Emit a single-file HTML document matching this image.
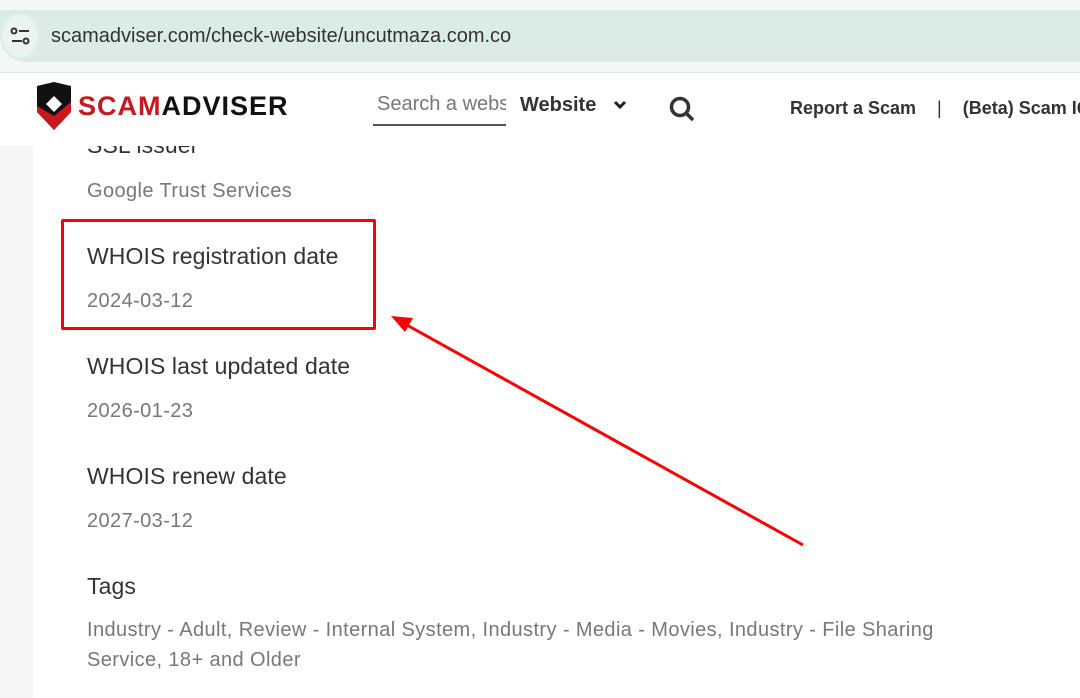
<!DOCTYPE html>
<html><head><style>
body{margin:0;width:1080px;height:698px;overflow:hidden;background:#f4f5f5;font-family:"Liberation Sans",Arial,sans-serif;position:relative}
.a{position:absolute}
.lab{position:absolute;left:87px;font-size:23px;color:#333;letter-spacing:0.1px}
.val{position:absolute;left:87px;font-size:20px;color:#777;letter-spacing:0.4px}
</style></head><body>
<div class="a" style="left:0;top:0;width:1080px;height:72px;background:#f3f8f7;border-bottom:1px solid #d6e3e0"></div>
<div class="a" style="left:0;top:10px;width:1080px;height:52px;background:#dbece8;border-radius:0 0 0 26px"></div>
<div class="a" style="left:2px;top:14px;width:36px;height:44px;border-radius:50%;background:#e9f3f1"></div>
<svg class="a" style="left:10px;top:26px" width="22" height="20" viewBox="0 0 22 20" fill="none" stroke="#333" stroke-width="2"><circle cx="4" cy="5" r="2.5"/><line x1="9" y1="5" x2="19" y2="5"/><line x1="2" y1="15" x2="12" y2="15"/><circle cx="16" cy="15" r="2.5"/></svg>
<div class="a" style="left:51px;top:25px;font-size:20px;color:#333">scamadviser.com/check-website/uncutmaza.com.co</div>
<div class="a" style="left:0;top:73px;width:1080px;height:73px;background:#fff"></div>
<div class="a" style="left:33px;top:146px;width:1047px;height:552px;background:#fff"></div>
<svg class="a" style="left:35px;top:82px" width="38" height="50" viewBox="0 0 38 50"><path d="M2 4 L19 0 L36 4 L36 30 L19 48 L2 30Z" fill="#111"/><path d="M2 24 L19 34 L36 20 L36 30 L19 48 L2 30Z" fill="#c8181e"/><path d="M19 14 L27 22 L19 30 L11 22Z" fill="#fff"/></svg>
<div class="a" style="left:78px;top:91px;font-size:27px;font-weight:bold;letter-spacing:1px"><span style="color:#c8181e">SCAM</span><span style="color:#111">ADVISER</span></div>
<div class="a" style="left:373px;top:93px;width:129px;height:31px;border-bottom:2px solid #555;overflow:hidden;font-size:20px;color:#777;white-space:nowrap;padding-left:4px">Search a website</div>
<div class="a" style="left:520px;top:94px;font-size:20px;font-weight:bold;color:#333">Website</div>
<svg class="a" style="left:613px;top:100px" width="14" height="10" viewBox="0 0 14 10"><path d="M2 2 L7 7 L12 2" stroke="#222" stroke-width="3" fill="none"/></svg>
<svg class="a" style="left:668px;top:95px" width="28" height="28" viewBox="0 0 28 28" fill="none" stroke="#333" stroke-width="3.5"><circle cx="12" cy="12" r="8.5"/><line x1="18" y1="18" x2="25" y2="25"/></svg>
<div class="a" style="left:790px;top:98px;font-size:18px;font-weight:bold;color:#333;white-space:nowrap">Report a Scam <span style="font-weight:normal;margin:0 16px">|</span> (Beta) Scam IQ</div>
<div class="lab" style="top:132px;clip-path:inset(14px 0 0 0)">SSL issuer</div>
<div class="val" style="top:180px">Google Trust Services</div>
<div class="lab" style="top:243px">WHOIS registration date</div>
<div class="val" style="top:290px">2024-03-12</div>
<div class="lab" style="top:353px">WHOIS last updated date</div>
<div class="val" style="top:400px">2026-01-23</div>
<div class="lab" style="top:463px">WHOIS renew date</div>
<div class="val" style="top:510px">2027-03-12</div>
<div class="lab" style="top:573px">Tags</div>
<div class="val" style="top:615px;width:890px;line-height:30px">Industry - Adult, Review - Internal System, Industry - Media - Movies, Industry - File Sharing Service, 18+ and Older</div>
<div class="a" style="left:61px;top:219px;width:309px;height:105px;border:3px solid #f00;border-radius:2px"></div>
<svg class="a" style="left:0;top:0" width="1080" height="698"><line x1="803" y1="545" x2="405" y2="324" stroke="#f00" stroke-width="3"/><path d="M391 316 L413 318 L405 332Z" fill="#f00"/></svg>
</body></html>
